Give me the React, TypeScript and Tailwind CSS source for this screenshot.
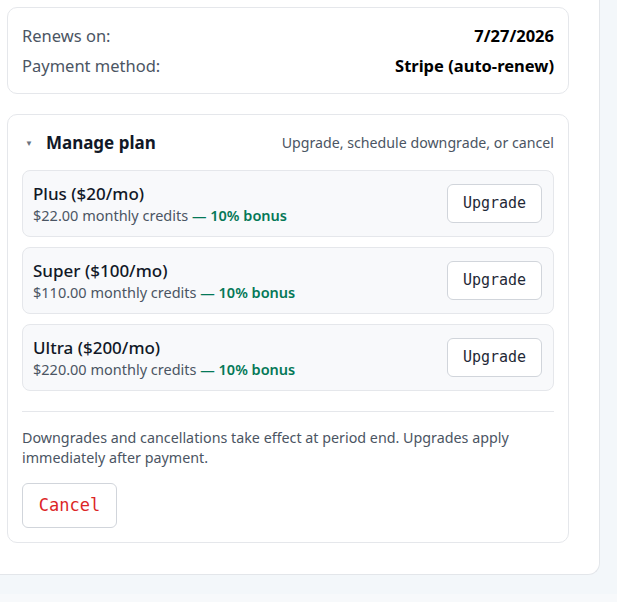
import React from "react";

const sans = { fontFamily: "'Noto Sans', Roboto, sans-serif" };
const mono = "font-['DejaVu_Sans_Mono',monospace]";

type Plan = { name: string; credits: string };

const plans: Plan[] = [
  { name: "Plus ($20/mo)", credits: "$22.00" },
  { name: "Super ($100/mo)", credits: "$110.00" },
  { name: "Ultra ($200/mo)", credits: "$220.00" },
];

function PlanRow({ plan }: { plan: Plan }) {
  return (
    <div className="flex h-[67px] items-center justify-between rounded-lg border border-[#e5e7eb] bg-[#f8f9fb] pl-[10px] pr-[11px]">
      <div className="flex flex-col">
        <div className="text-[17px] leading-[22px] font-medium text-[#111827]">{plan.name}</div>
        <div className="text-[14.5px] leading-[20px] text-[#4b5563]">
          {plan.credits} monthly credits{" "}
          <span className="font-semibold text-[#047857]">— 10% bonus</span>
        </div>
      </div>
      <button
        className={`h-[39px] w-[95px] rounded-md border border-[#d1d5db] bg-white text-[15px] text-[#1f2937] ${mono}`}
      >
        Upgrade
      </button>
    </div>
  );
}

export default function App() {
  return (
    <div className="flex h-[602px] w-full flex-col overflow-hidden bg-[#f3f7fa]" style={sans}>
      <div className="w-[600px] rounded-br-xl border-r border-b border-[#e3e6ea] bg-white pt-[7px] pb-[31px] pl-[7px] pr-[30px]">
        <div className="flex flex-col gap-[6px] rounded-[10px] border border-[#e5e7eb] px-[14px] pt-[16px] pb-[15px] text-[16.5px] leading-[24px]">
          <div className="flex justify-between">
            <span className="text-[#4b5563]">Renews on:</span>
            <span className="font-bold text-black">7/27/2026</span>
          </div>
          <div className="flex justify-between">
            <span className="text-[#4b5563]">Payment method:</span>
            <span className="font-bold text-black">Stripe (auto-renew)</span>
          </div>
        </div>

        <div className="mt-[20px] flex flex-col rounded-[10px] border border-[#e5e7eb] px-[14px] pt-[15px] pb-[14px]">
          <div className="flex h-[26px] items-center justify-between">
            <div className="flex items-center">
              <span className="ml-[3px] mr-[13px] text-[8px] text-[#6b7280]">▼</span>
              <span className="text-[17px] font-bold text-[#111827]">Manage plan</span>
            </div>
            <span className="text-[14.2px] text-[#4b5563]">Upgrade, schedule downgrade, or cancel</span>
          </div>

          <div className="mt-[14px] flex flex-col gap-[10px]">
            {plans.map((p) => (
              <PlanRow key={p.name} plan={p} />
            ))}
          </div>

          <div className="mt-[20px] h-px bg-[#e5e7eb]" />

          <p className="mt-[16px] text-[14.3px] leading-[20px] text-[#4b5563]">
            Downgrades and cancellations take effect at period end. Upgrades apply
            <br />
            immediately after payment.
          </p>

          <button
            className={`mt-[15px] h-[45px] w-[95px] rounded-md border border-[#d1d5db] bg-white text-[17px] text-[#dc2626] ${mono}`}
          >
            Cancel
          </button>
        </div>
      </div>
      <div className="mt-auto h-[8px] bg-[#f7f9fb]" />
    </div>
  );
}
